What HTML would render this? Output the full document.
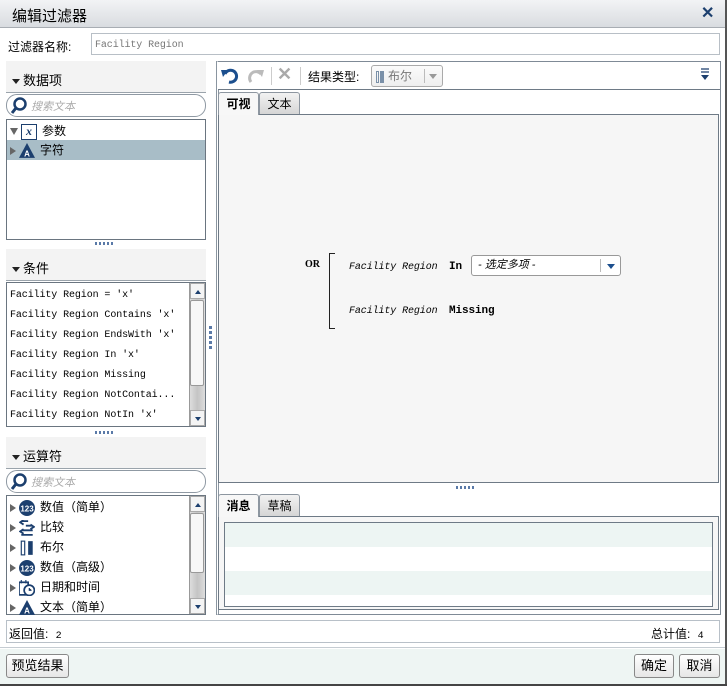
<!DOCTYPE html>
<html><head><meta charset="utf-8"><style>
*{box-sizing:border-box;margin:0;padding:0}
body{width:727px;height:686px;position:relative;overflow:hidden;background:#fff;font-family:"Liberation Sans","Noto Sans CJK SC",sans-serif;font-size:12px;color:#000}
.a{position:absolute}
.mono{font-family:"Liberation Mono","Noto Sans CJK SC",monospace;font-size:10px;letter-spacing:-0.1px}
.hdr{position:absolute;left:6px;width:200px;height:32px;background:#f3f3f3;border-bottom:1px solid #9aa3ab}
.hdr span{position:absolute;left:6px;bottom:3px;font-size:13px}
.tri{display:inline-block;width:0;height:0;border-left:4px solid transparent;border-right:4px solid transparent;border-top:5px solid #222;margin-right:3px;vertical-align:middle}
.search{position:absolute;left:6px;width:200px;height:23px;border:1px solid #8f99a3;border-radius:11px;background:#fff}
.search i{position:absolute;left:24px;top:3px;font-size:11px;color:#aaa;font-style:italic}
.list{position:absolute;left:6px;width:200px;border:1px solid #6a7580;background:#fff}
.dots{position:absolute;height:3px;background:repeating-linear-gradient(90deg,#5a7aa8 0 2px,transparent 2px 4px)}
.vdots{position:absolute;width:3px;background:repeating-linear-gradient(180deg,#5a7aa8 0 3px,transparent 3px 5px)}
.sb{position:absolute;right:0;top:0;bottom:0;width:16px;background:linear-gradient(90deg,#ddd,#c4c4c4,#ddd);border-left:1px solid #999}
.sb .u,.sb .d{position:absolute;left:0;width:15px;height:16px;background:#f4f4f4;border:1px solid #aaa}
.sb .u{top:0}.sb .d{bottom:0}
.sb .u:after,.sb .d:after{content:"";position:absolute;left:4px;top:6px;border-left:3px solid transparent;border-right:3px solid transparent}
.sb .u:after{border-bottom:4px solid #1c3f6e}.sb .d:after{border-top:4px solid #1c3f6e}
.sb .th{position:absolute;left:0;width:14px;background:#f7f7f7;border:1px solid #999;border-radius:2px}
.row{position:absolute;left:3px;height:20px;line-height:20px;white-space:nowrap}
.ar{display:inline-block;border-top:4px solid transparent;border-bottom:4px solid transparent;border-left:6px solid #666;margin-right:3px;vertical-align:middle}
.ic{display:inline-block;width:16px;height:16px;vertical-align:middle;margin-right:5px}
.btn{position:absolute;height:24px;border:1px solid #888;border-radius:3px;background:linear-gradient(#fff,#e6e6e6);text-align:center;line-height:22px;font-size:13px}
.tab{position:absolute;height:23px;border:1px solid #8d96a0;border-bottom:none;border-radius:3px 3px 0 0;background:linear-gradient(#f2f2f2,#d4d4d4);line-height:22px;text-align:center;font-size:12px}
.tab.on{background:#f7f7f7;font-weight:bold}
</style></head><body>
<div class="a" style="left:0;top:0;width:727px;height:28px;background:linear-gradient(#f2f3f5,#d9dce0);border-bottom:1px solid #a8adb3"></div>
<div class="a" style="left:12px;top:5px;font-size:15px">编辑过滤器</div>
<div class="a" style="left:701px;top:3px;font-size:16px;font-weight:bold;color:#1c3f6e">✕</div>
<div class="a" style="left:725px;top:0;width:2px;height:686px;background:#555"></div>
<div class="a" style="left:0;top:684px;width:727px;height:2px;background:#444"></div>

<div class="a" style="left:8px;top:38px;font-size:12px">过滤器名称:</div>
<div class="a mono" style="left:91px;top:33px;width:629px;height:22px;border:1px solid #b8bfc6;padding:6px 3px 0;color:#777">Facility Region</div>

<div class="hdr" style="top:61px"><span><i class="tri"></i>数据项</span></div>
<div class="search" style="top:94px"><svg class="a" style="left:3px;top:2px" width="18" height="18" viewBox="0 0 18 18"><circle cx="10" cy="7" r="5.5" fill="#fff" stroke="#1c3f6e" stroke-width="2.5"/><path d="M6 11 L2 16" stroke="#1c3f6e" stroke-width="3"/></svg><i>搜索文本</i></div>
<div class="list" style="top:119px;height:121px">
 <div class="row" style="top:1px;left:3px"><span style="display:inline-block;border-left:4px solid transparent;border-right:4px solid transparent;border-top:7px solid #666;margin-right:3px;vertical-align:middle"></span><span class="ic" style="border:1.5px solid #1c3f6e;font:italic bold 12px 'Liberation Serif';color:#1c3f6e;text-align:center;line-height:13px">x</span>参数</div>
 <div class="a" style="left:0;top:20px;width:198px;height:20px;background:#a8bdc7"></div>
 <div class="row" style="top:20px"><i class="ar"></i><svg class="ic" viewBox="0 0 14 14"><path d="M7 0 L14 13 L0 13Z" fill="#1c3f6e"/><text x="7" y="12" font-size="7" fill="#fff" text-anchor="middle" font-weight="bold" font-family="Liberation Sans">A</text></svg>字符</div>
</div>
<div class="dots" style="left:95px;top:242px;width:20px"></div>

<div class="hdr" style="top:249px"><span><i class="tri"></i>条件</span></div>
<div class="list mono" style="top:282px;height:145px;font-size:10px">
 <div class="row" style="top:3px">Facility Region = 'x'</div>
 <div class="row" style="top:23px">Facility Region Contains 'x'</div>
 <div class="row" style="top:43px">Facility Region EndsWith 'x'</div>
 <div class="row" style="top:63px">Facility Region In 'x'</div>
 <div class="row" style="top:83px">Facility Region Missing</div>
 <div class="row" style="top:103px">Facility Region NotContai...</div>
 <div class="row" style="top:123px">Facility Region NotIn 'x'</div>
 <div class="sb"><div class="u"></div><div class="th" style="top:17px;height:86px"></div><div class="d"></div></div>
</div>
<div class="dots" style="left:95px;top:431px;width:20px"></div>

<div class="hdr" style="top:437px"><span><i class="tri"></i>运算符</span></div>
<div class="search" style="top:470px"><svg class="a" style="left:3px;top:2px" width="18" height="18" viewBox="0 0 18 18"><circle cx="10" cy="7" r="5.5" fill="#fff" stroke="#1c3f6e" stroke-width="2.5"/><path d="M6 11 L2 16" stroke="#1c3f6e" stroke-width="3"/></svg><i>搜索文本</i></div>
<div class="list" style="top:495px;height:120px">
 <div class="row" style="top:1px"><i class="ar"></i><svg class="ic" viewBox="0 0 14 14"><circle cx="7" cy="7" r="7" fill="#1c3f6e"/><text x="7" y="10" font-size="7" fill="#fff" text-anchor="middle" font-family="Liberation Sans" font-weight="bold">123</text></svg>数值（简单）</div>
 <div class="row" style="top:21px"><i class="ar"></i><svg class="ic" viewBox="0 0 14 14"><path d="M8 1H2M4 0L1 2L4 4M6 5H12M10 4L13 6L10 8M12 9H2M4 8L1 10L4 12M2 13H12" stroke="#1c3f6e" stroke-width="1.6" fill="none"/></svg>比较</div>
 <div class="row" style="top:41px"><i class="ar"></i><svg class="ic" viewBox="0 0 14 14"><rect x="2" y="1" width="3" height="12" fill="none" stroke="#1c3f6e"/><rect x="8" y="1" width="4" height="12" fill="#1c3f6e"/></svg>布尔</div>
 <div class="row" style="top:61px"><i class="ar"></i><svg class="ic" viewBox="0 0 14 14"><circle cx="7" cy="7" r="7" fill="#1c3f6e"/><text x="7" y="10" font-size="7" fill="#fff" text-anchor="middle" font-family="Liberation Sans" font-weight="bold">123</text></svg>数值（高级）</div>
 <div class="row" style="top:81px"><i class="ar"></i><svg class="ic" viewBox="0 0 14 14"><rect x="0" y="2" width="8" height="11" fill="none" stroke="#1c3f6e" stroke-width="1.5"/><path d="M2 0V3M6 0V3" stroke="#1c3f6e"/><circle cx="9" cy="9" r="4.5" fill="#fff" stroke="#1c3f6e" stroke-width="1.5"/><path d="M9 7V9H11" stroke="#1c3f6e"/></svg>日期和时间</div>
 <div class="row" style="top:101px"><i class="ar"></i><svg class="ic" viewBox="0 0 14 14"><path d="M7 0 L14 13 L0 13Z" fill="#1c3f6e"/><text x="7" y="12" font-size="7" fill="#fff" text-anchor="middle" font-weight="bold" font-family="Liberation Sans">A</text></svg>文本（简单）</div>
 <div class="sb"><div class="u"></div><div class="th" style="top:17px;height:60px"></div><div class="d"></div></div>
</div>

<div class="vdots" style="left:209px;top:326px;height:25px"></div>

<div class="a" style="left:216px;top:61px;width:505px;height:554px;border:1px solid #7f8a96;border-left:3px double #8a95a0;background:#fff"></div>
<div class="a" style="left:218px;top:62px;width:502px;height:28px;border-bottom:1px solid #6e7a86;background:#fff"></div>
<svg class="a" style="left:221px;top:67px" width="60" height="18" viewBox="0 0 60 18"><path d="M4 7 A6 6 0 1 1 8 15" stroke="#1c4f8e" stroke-width="3" fill="none"/><path d="M0 3 L7 3 L2 10Z" fill="#1c4f8e"/><path d="M40 7 A6 6 0 1 0 30 15" stroke="#bbb" stroke-width="3" fill="none"/><path d="M43 3 L36 3 L41 10Z" fill="#bbb"/></svg>
<div class="a" style="left:271px;top:67px;width:1px;height:18px;background:#ccc"></div>
<div class="a" style="left:277px;top:64px;font-size:18px;color:#aaa;font-weight:bold">✕</div>
<div class="a" style="left:300px;top:67px;width:1px;height:18px;background:#ccc"></div>
<div class="a" style="left:308px;top:68px;font-size:12px">结果类型:</div>
<div class="a" style="left:371px;top:65px;width:72px;height:22px;border:1px solid #aaa;border-radius:3px;background:linear-gradient(#fbfbfb,#eee);color:#777;font-size:12px;line-height:20px;padding-left:4px"><span style="display:inline-block;width:3px;height:12px;border:1px solid #7a90a8;vertical-align:middle"></span><span style="display:inline-block;width:4px;height:12px;background:#7a90a8;margin:0 4px 0 1px;vertical-align:middle"></span>布尔<span class="a" style="left:52px;top:3px;width:1px;height:14px;background:#bbb"></span><span class="a" style="left:57px;top:8px;border-left:4px solid transparent;border-right:4px solid transparent;border-top:5px solid #999"></span></div>
<svg class="a" style="left:700px;top:68px" width="10" height="13" viewBox="0 0 10 13"><path d="M1 1H9M1 4H9" stroke="#1c3f6e" stroke-width="1.3"/><path d="M1 7H9L5 12Z" fill="#1c3f6e"/></svg>

<div class="tab on" style="left:218px;top:92px;width:41px;height:23px;z-index:2">可视</div>
<div class="tab" style="left:259px;top:92px;width:41px">文本</div>
<div class="a" style="left:218px;top:114px;width:501px;height:369px;border:1px solid #6e7a86;background:#f6f6f6"></div>

<div class="a" style="left:305px;top:259px;font:bold 10px 'Liberation Serif',serif">OR</div>
<div class="a" style="left:329px;top:253px;width:6px;height:76px;border:1.5px solid #222;border-right:none"></div>
<div class="a mono" style="left:349px;top:262px;font-style:italic;font-size:10px">Facility Region</div>
<div class="a mono" style="left:449px;top:261px;font-weight:bold;font-size:11px">In</div>
<div class="a" style="left:471px;top:255px;width:150px;height:21px;border:1px solid #999;border-radius:3px;background:#fff;font-size:11px;font-style:italic;line-height:19px;padding-left:6px">- 选定多项 -<span class="a" style="left:128px;top:3px;width:1px;height:13px;background:#bbb"></span><span class="a" style="left:135px;top:8px;border-left:4px solid transparent;border-right:4px solid transparent;border-top:5px solid #1c4f8e"></span></div>
<div class="a mono" style="left:349px;top:306px;font-style:italic;font-size:10px">Facility Region</div>
<div class="a mono" style="left:449px;top:305px;font-weight:bold;font-size:11px">Missing</div>

<div class="dots" style="left:456px;top:486px;width:20px"></div>

<div class="tab on" style="left:218px;top:494px;width:41px;z-index:2">消息</div>
<div class="tab" style="left:259px;top:494px;width:41px">草稿</div>
<div class="a" style="left:218px;top:516px;width:501px;height:94px;border:1px solid #6e7a86;background:#f6f6f6"></div>
<div class="a" style="left:224px;top:522px;width:489px;height:85px;border:1px solid #6e7a86;background:repeating-linear-gradient(180deg,#edf5f3 0 24px,#fff 24px 48px)"></div>

<div class="a" style="left:0;top:615px;width:725px;height:33px;border-bottom:1px solid #c5ccd2;background:#fff"></div>
<div class="a" style="left:6px;top:620px;width:714px;height:23px;border:1px solid #b8c0c8;background:#fff"></div>
<div class="a" style="left:9px;top:625px;font-size:12px">返回值: <span class="mono" style="margin-left:4px">2</span></div>
<div class="a" style="left:651px;top:625px;font-size:12px">总计值: <span class="mono" style="margin-left:4px">4</span></div>

<div class="a" style="left:0;top:649px;width:725px;height:35px;background:#eef5f3"></div>
<div class="btn" style="left:6px;top:654px;width:63px">预览结果</div>
<div class="btn" style="left:634px;top:654px;width:40px">确定</div>
<div class="btn" style="left:679px;top:654px;width:41px">取消</div>
</body></html>
